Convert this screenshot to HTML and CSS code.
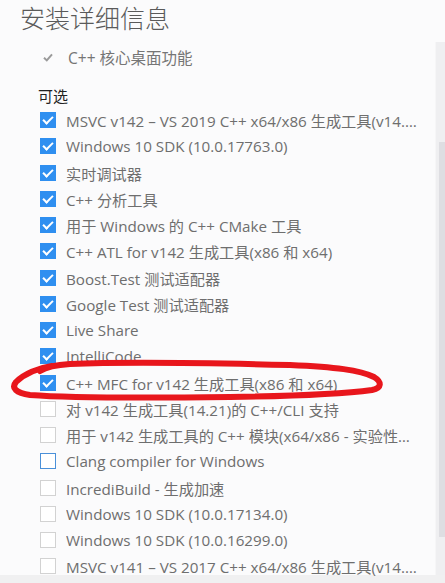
FILE: index.html
```html
<!DOCTYPE html>
<html lang="zh-CN">
<head>
<meta charset="utf-8">
<title>安装详细信息</title>
<link rel="stylesheet" href="styles.css">
</head>
<body>
<div class="page">
  <div class="main">
    <h1 class="title">安装详细信息</h1>
    <div class="core">
      <svg class="core-check" width="10" height="9" viewBox="0 0 10 9"><path d="M1 4.8 L3.8 7.4 L9 1.4" fill="none" stroke="#9a9a9a" stroke-width="2"/></svg>
      <span>C++ 核心桌面功能</span>
    </div>
    <div class="section">可选</div>
    <ul class="list">
      <li class="row"><span class="box on"></span><span class="label">MSVC v142 – VS 2019 C++ x64/x86 生成工具(v14.21)</span></li>
      <li class="row"><span class="box on"></span><span class="label">Windows 10 SDK (10.0.17763.0)</span></li>
      <li class="row"><span class="box on"></span><span class="label">实时调试器</span></li>
      <li class="row"><span class="box on"></span><span class="label">C++ 分析工具</span></li>
      <li class="row"><span class="box on"></span><span class="label">用于 Windows 的 C++ CMake 工具</span></li>
      <li class="row"><span class="box on"></span><span class="label">C++ ATL for v142 生成工具(x86 和 x64)</span></li>
      <li class="row"><span class="box on"></span><span class="label">Boost.Test 测试适配器</span></li>
      <li class="row"><span class="box on"></span><span class="label">Google Test 测试适配器</span></li>
      <li class="row"><span class="box on"></span><span class="label">Live Share</span></li>
      <li class="row"><span class="box on"></span><span class="label">IntelliCode</span></li>
      <li class="row"><span class="box on"></span><span class="label">C++ MFC for v142 生成工具(x86 和 x64)</span></li>
      <li class="row"><span class="box"></span><span class="label">对 v142 生成工具(14.21)的 C++/CLI 支持</span></li>
      <li class="row"><span class="box"></span><span class="label">用于 v142 生成工具的 C++ 模块(x64/x86 - 实验性组件)</span></li>
      <li class="row"><span class="box focus"></span><span class="label">Clang compiler for Windows</span></li>
      <li class="row"><span class="box"></span><span class="label">IncrediBuild - 生成加速</span></li>
      <li class="row"><span class="box"></span><span class="label">Windows 10 SDK (10.0.17134.0)</span></li>
      <li class="row"><span class="box"></span><span class="label">Windows 10 SDK (10.0.16299.0)</span></li>
      <li class="row"><span class="box"></span><span class="label">MSVC v141 – VS 2017 C++ x64/x86 生成工具(v14.16)</span></li>
    </ul>
    <svg class="circle" width="445" height="583" viewBox="0 0 445 583">
      <path d="M52 366 C38 368 24 374 16 382 C11 388 16 393 30 395 C70 398 150 398 230 397 C300 396 350 393 372 390 C382 388 382 382 374 377 C360 370 335 367 290 365 C210 363 120 362 70 364 C55 365 46 367 40 371" fill="none" stroke="#e8161c" stroke-width="6" stroke-linecap="round" stroke-linejoin="round"/>
    </svg>
  </div>
  <div class="scrollbar"><div class="thumb"></div></div>
</div>
<div class="bottom"></div>
</body>
</html>
```
FILE: styles.css
```css
html, body {
  margin: 0;
  padding: 0;
  background: #fbfbfc;
  width: 445px;
  height: 583px;
  overflow: hidden;
  font-family: "Open Sans", "Noto Sans CJK SC", sans-serif;
}
.page {
  display: flex;
  height: 575px;
}
.main {
  flex: 1;
  position: relative;
}
.title {
  margin: 0;
  padding: 2px 0 0 20px;
  height: 32px;
  font-family: "Noto Sans CJK SC", sans-serif;
  font-weight: 300;
  font-size: 25px;
  line-height: 30px;
  color: #5a5a5a;
}
.core {
  display: flex;
  align-items: center;
  height: 26px;
  padding-left: 43px;
  margin-top: 10px;
  font-size: 15.5px;
  color: #757575;
}
.core-check {
  margin-right: 15px;
}
.section {
  height: 22px;
  line-height: 22px;
  margin-top: 15px;
  padding-left: 38px;
  font-family: "Noto Sans CJK SC", sans-serif;
  font-size: 15px;
  color: #222;
}
.list {
  list-style: none;
  margin: 0;
  padding: 0;
  margin-top: 0;
}
.row {
  display: flex;
  align-items: center;
  height: 26.25px;
  padding-left: 40px;
  width: 420px;
  box-sizing: border-box;
}
.box {
  flex: none;
  width: 16px;
  height: 16px;
  box-sizing: border-box;
  border: 1px solid #d2d2d2;
  background: #fff;
  margin-right: 10px;
  position: relative;
}
.box.focus {
  border-color: #4a90d9;
}
.box.on {
  background: #2f8ff0;
  border-color: #2f8ff0;
}
.box.on::after {
  content: "";
  position: absolute;
  left: 4px;
  top: 1px;
  width: 4px;
  height: 8px;
  border-right: 2.5px solid #fff;
  border-bottom: 2.5px solid #fff;
  transform: rotate(45deg);
}
.label {
  flex: 1;
  min-width: 0;
  white-space: nowrap;
  overflow: hidden;
  text-overflow: ellipsis;
  font-size: 15.2px;
  color: #6e6e6e;
}
.circle {
  position: absolute;
  left: 0;
  top: 0;
  pointer-events: none;
}
.scrollbar {
  flex: none;
  width: 9px;
  margin-top: 42px;
  background: #efeff1;
  border-left: 1px solid #f6f6f7;
  position: relative;
}
.thumb {
  position: absolute;
  left: 3px;
  right: 0;
  top: 100px;
  height: 395px;
  background: #dedee2;
}
.bottom {
  height: 8px;
  background: #f0f0f1;
}
```
